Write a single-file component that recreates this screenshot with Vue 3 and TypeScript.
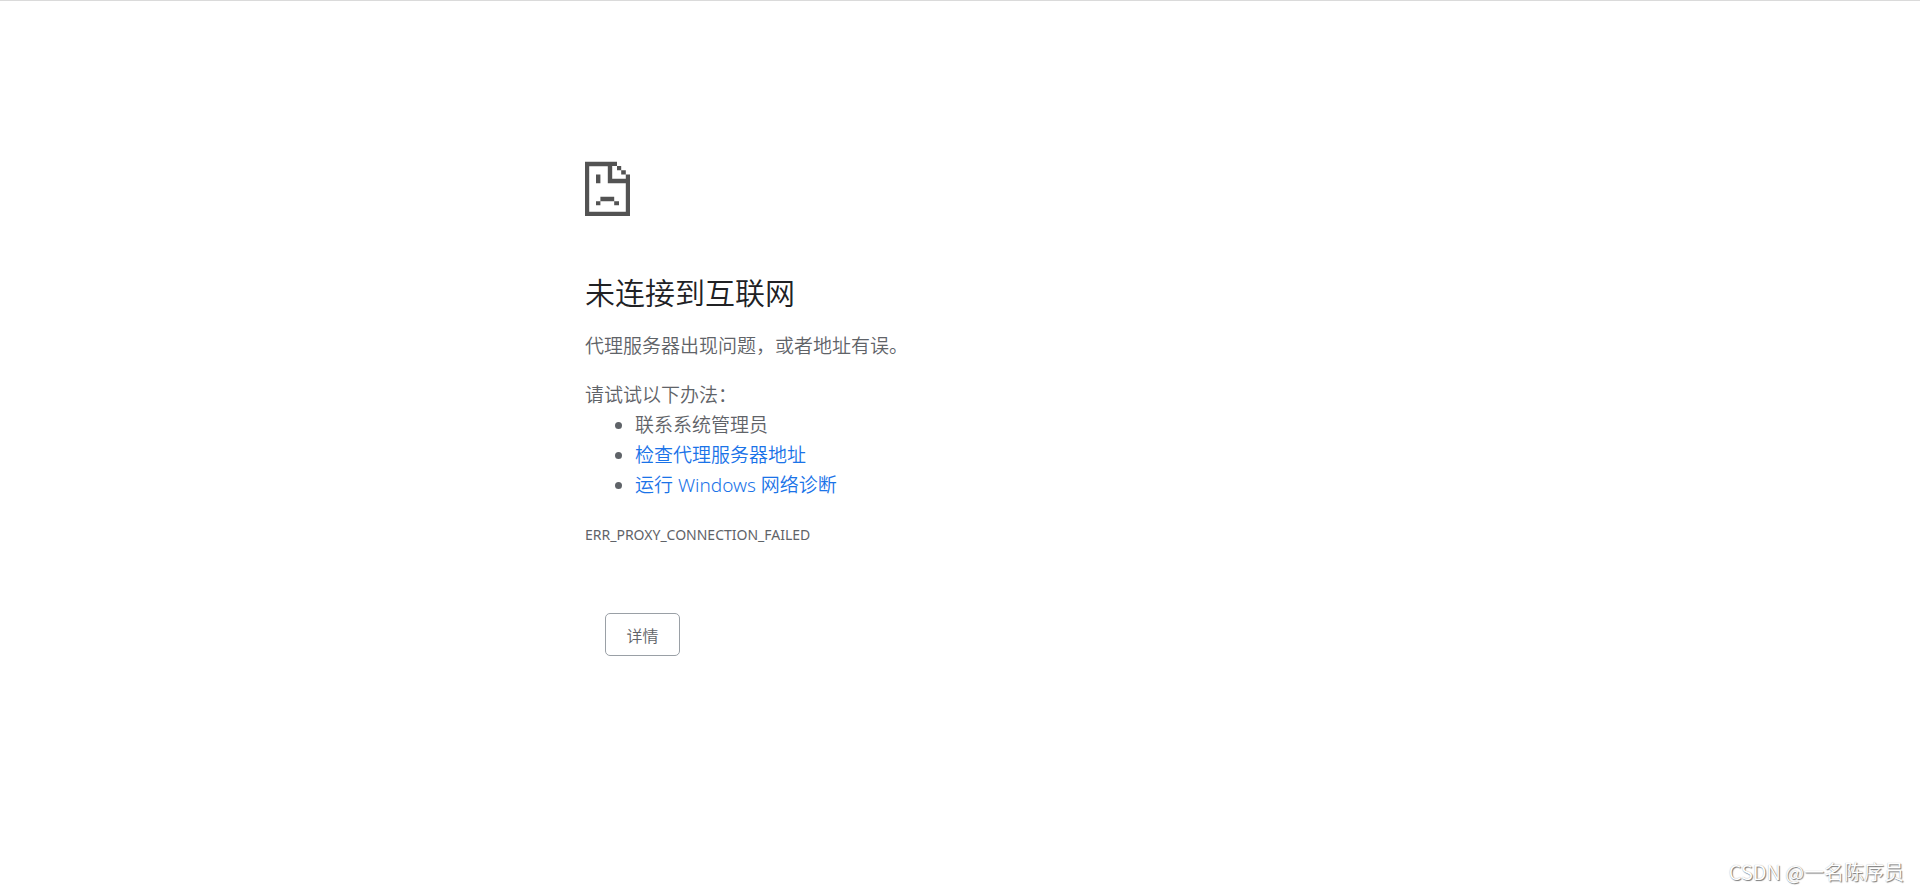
<script setup lang="ts">
interface Suggestion {
  text: string
  href?: string
}

const suggestions: Suggestion[] = [
  { text: '联系系统管理员' },
  { text: '检查代理服务器地址', href: '#proxy' },
  { text: '运行 Windows 网络诊断', href: '#diagnose' },
]
</script>

<template>
  <div class="page">
    <main class="content">
      <svg class="icon" viewBox="0 0 45 54" aria-hidden="true">
        <path
          fill="#535353"
          fill-rule="evenodd"
          d="M0 -.3H32V4H27.2V16.8H40.8V12.6H45V54H0ZM4.2 4.2V49.7H40.8V21.2H22.8V4.2ZM32 4H36.2V8.3H32ZM36.2 8.3H40.8V12.6H36.2ZM11 12.5H15.4V21.2H11ZM15.4 34.7H29.2V39.2H15.4ZM11 39.2H15.4V43.2H11ZM29.2 39.2H34V43.2H29.2Z"
        />
      </svg>
      <h1>未连接到互联网</h1>
      <p>代理服务器出现问题，或者地址有误。</p>
      <section class="suggestions">
        <div>请试试以下办法：</div>
        <ul>
          <li v-for="item in suggestions" :key="item.text">
            <a v-if="item.href" :href="item.href">{{ item.text }}</a>
            <template v-else>{{ item.text }}</template>
          </li>
        </ul>
      </section>
      <div class="code">ERR_PROXY_CONNECTION_FAILED</div>
      <button type="button">详情</button>
    </main>
    <footer>CSDN @一名陈序员</footer>
  </div>
</template>

<style>
body {
  margin: 0;
  background: #fff;
}
</style>

<style scoped>
.page {
  box-sizing: border-box;
  min-height: 100vh;
  display: flex;
  flex-direction: column;
  border-top: 1px solid #dadada;
  color: #5f6368;
  font-family: "Noto Sans", "Noto Sans CJK SC", sans-serif;
  font-size: 19px;
  font-weight: 350;
  line-height: 30px;
}
.content {
  box-sizing: border-box;
  width: 100%;
  max-width: 750px;
  margin: 0 auto;
  padding-top: 161px;
  flex: 1;
}
.icon {
  display: block;
  width: 45px;
  height: 54px;
  overflow: visible;
}
h1 {
  margin: 57px 0 18px;
  color: #202124;
  font-size: 30px;
  font-weight: 350;
  line-height: 40px;
}
p {
  margin: 0;
}
.suggestions {
  margin-top: 19px;
}
ul {
  margin: 0;
  padding-left: 50px;
}
a {
  color: #1a73e8;
  text-decoration: none;
}
.code {
  margin-top: 20px;
  font-size: 14px;
  font-weight: 400;
}
button {
  display: block;
  box-sizing: border-box;
  min-width: 75px;
  height: 43px;
  margin: 63px 0 0 20px;
  padding: 0 20px;
  border: 1px solid #9aa0a6;
  border-radius: 5px;
  background: #fff;
  color: #5f6368;
  font-family: "Noto Sans CJK SC", sans-serif;
  font-size: 16px;
  font-weight: 350;
  cursor: pointer;
}
footer {
  padding: 0 16px 5px;
  text-align: right;
  color: #fff;
  font-family: "Noto Sans CJK SC", sans-serif;
  font-size: 20px;
  text-shadow: 1px 1px 1px #777, 0 0 1px #aaa;
}
</style>
